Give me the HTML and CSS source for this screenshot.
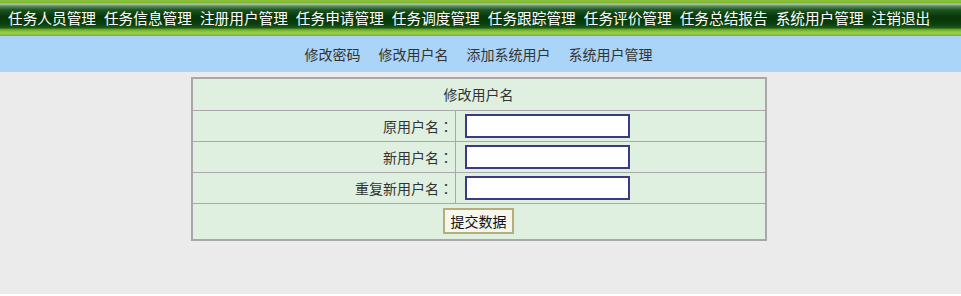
FILE: index.html
```html
<!DOCTYPE html>
<html>
<head>
    <title>修改用户名</title>
    <link rel="stylesheet" href="styles.css">
</head>
<body>
    <div class="topnav">
        <a href="#">任务人员管理</a>
        <a href="#">任务信息管理</a>
        <a href="#">注册用户管理</a>
        <a href="#">任务申请管理</a>
        <a href="#">任务调度管理</a>
        <a href="#">任务跟踪管理</a>
        <a href="#">任务评价管理</a>
        <a href="#">任务总结报告</a>
        <a href="#">系统用户管理</a>
        <a href="#">注销退出</a>
    </div>
    <div class="subnav">
        <a href="#">修改密码</a>
        <a href="#">修改用户名</a>
        <a href="#">添加系统用户</a>
        <a href="#">系统用户管理</a>
    </div>

    <form class="formbox">
        <table class="formtable">
            <tr class="head">
                <td colspan="2">修改用户名</td>
            </tr>
            <tr>
                <td class="label">原用户名<span class="colon">：</span></td>
                <td><input type="text" class="field"></td>
            </tr>
            <tr>
                <td class="label">新用户名<span class="colon">：</span></td>
                <td><input type="text" class="field"></td>
            </tr>
            <tr>
                <td class="label">重复新用户名<span class="colon">：</span></td>
                <td><input type="text" class="field"></td>
            </tr>
            <tr class="foot">
                <td colspan="2"><button type="button" class="submit">提交数据</button></td>
            </tr>
        </table>
    </form>
</body>
</html>
```

FILE: styles.css
```css
* {
    margin: 0;
    padding: 0;
    box-sizing: border-box;
}
html {
    background: #ffffff;
}
body {
    background: #ebebeb;
    height: 294px;
    font-family: "Noto Sans CJK SC", "Noto Sans", sans-serif;
    color: #333333;
}

.topnav {
    height: 36px;
    display: flex;
    align-items: center;
    gap: 8px;
    padding: 0 0 1px 8px;
    background: linear-gradient(to bottom,
        #8cc43c 0px, #7fb832 3px,
        #b5cdb0 4px, #5f8f5f 6px, #1c5220 10px, #073508 17px, #0b3f0d 24px, #1d5a1c 28px,
        #5d9c25 29px, #84bf34 31px, #9ed24a 33px, #77b22e 36px);
}
.topnav a {
    color: #ffffff;
    text-decoration: none;
    font-size: 14.67px;
    line-height: 18px;
    white-space: nowrap;
}

.subnav {
    height: 36px;
    display: flex;
    align-items: center;
    justify-content: center;
    gap: 18px;
    padding-right: 4px;
    background: #aad4f8;
}
.subnav a {
    color: #333333;
    text-decoration: none;
    font-size: 14px;
}

.formbox {
    padding-top: 5px;
    padding-right: 4px;
}
.formtable {
    width: 576px;
    margin: 0 auto;
    border-collapse: collapse;
    background: #dff0e0;
    border: 2px solid #a8a8a8;
    font-size: 14px;
    color: #333333;
}
.formtable td {
    border: 1px solid #a8a8a8;
    height: 31px;
    padding: 0 8px;
}
.formtable .head td {
    text-align: center;
    height: 32px;
}
.formtable .label {
    width: 264px;
    text-align: right;
    padding-right: 2px;
}
.colon {
    font-family: "Noto Sans CJK TC", sans-serif;
}
.formtable .foot td {
    text-align: center;
    height: 37px;
}
.field {
    display: block;
    width: 165px;
    height: 24px;
    margin-left: 1px;
    border: 2px solid #3a3a86;
    background: #ffffff;
}
.submit {
    width: 71px;
    height: 26px;
    font-family: "Noto Sans CJK SC", sans-serif;
    font-size: 14px;
    color: #111111;
    background: #f6f6ee;
    border: 2px solid #b6ae78;
    cursor: pointer;
}
```
